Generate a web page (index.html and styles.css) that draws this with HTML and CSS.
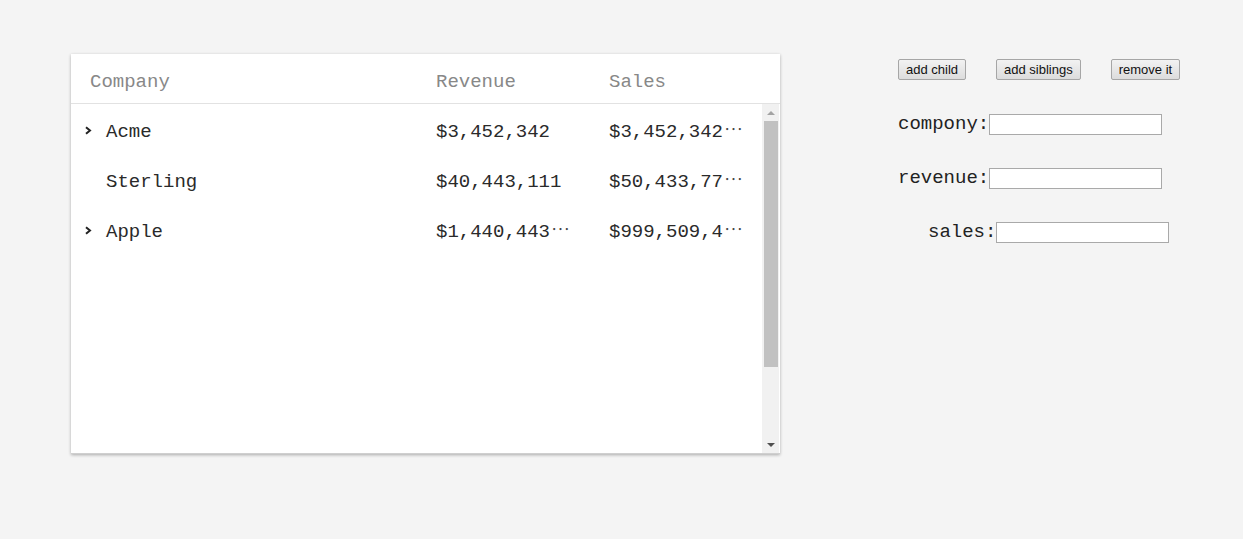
FILE: index.html
```html
<!DOCTYPE html>
<html>
<head>
<meta charset="utf-8">
<link rel="stylesheet" href="styles.css">
</head>
<body>
<div class="page">
  <div class="card">
    <div class="head">
      <div class="col c-company">Company</div>
      <div class="col c-rev">Revenue</div>
      <div class="col c-sales">Sales</div>
    </div>
    <div class="body">
      <div class="rows">
        <div class="row">
          <div class="col c-company"><span class="chev"><svg width="8" height="9" viewBox="0 0 8 9"><path d="M2 1.2 L6 4.5 L2 7.8" fill="none" stroke="#222" stroke-width="2"/></svg></span>Acme</div>
          <div class="col c-rev">$3,452,342</div>
          <div class="col c-sales">$3,452,342<span class="ell">⋯</span></div>
        </div>
        <div class="row">
          <div class="col c-company"><span class="chev"></span>Sterling</div>
          <div class="col c-rev">$40,443,111</div>
          <div class="col c-sales">$50,433,77<span class="ell">⋯</span></div>
        </div>
        <div class="row">
          <div class="col c-company"><span class="chev"><svg width="8" height="9" viewBox="0 0 8 9"><path d="M2 1.2 L6 4.5 L2 7.8" fill="none" stroke="#222" stroke-width="2"/></svg></span>Apple</div>
          <div class="col c-rev">$1,440,443<span class="ell">⋯</span></div>
          <div class="col c-sales">$999,509,4<span class="ell">⋯</span></div>
        </div>
      </div>
      <div class="scrollbar">
        <div class="arrow up"></div>
        <div class="thumb"></div>
        <div class="track-rest"></div>
        <div class="arrow down"></div>
      </div>
    </div>
  </div>
  <div class="panel">
    <div class="buttons">
      <button class="btn">add child</button>
      <button class="btn">add siblings</button>
      <button class="btn">remove it</button>
    </div>
    <div class="field"><span class="label">compony:</span><input class="inp" type="text"></div>
    <div class="field"><span class="label">revenue:</span><input class="inp" type="text"></div>
    <div class="field shift"><span class="label">sales:</span><input class="inp" type="text"></div>
  </div>
</div>
</body>
</html>
```
FILE: styles.css
```css
html, body {
  margin: 0;
  padding: 0;
  background: #f4f4f4;
}
.page {
  display: flex;
  align-items: flex-start;
  padding: 54px 0 40px 71px;
  font-family: "Liberation Mono", "DejaVu Sans Mono", monospace;
  font-size: 19px;
}
.card {
  width: 709px;
  height: 399px;
  background: #fff;
  border-bottom: 1px solid #cfcfcf;
  box-shadow: 0 1px 3px rgba(0,0,0,0.3);
  display: flex;
  flex-direction: column;
}
.head {
  display: flex;
  border-bottom: 1px solid #e2e2e2;
  align-items: center;
  padding-top: 6px;
  box-sizing: border-box;
  height: 50px;
  color: #888;
}
.col {
  white-space: nowrap;
  box-sizing: border-box;
  line-height: 30px;
}
.c-company { width: 349px; padding-left: 19px; display: flex; align-items: center; }
.c-rev { width: 173px; padding-left: 16px; }
.c-sales { width: 169px; padding-left: 16px; }
.body {
  flex: 1;
  display: flex;
  min-height: 0;
}
.rows {
  width: 691px;
  color: #2a2a2a;
  padding-top: 3px;
}
.row {
  display: flex;
  height: 50px;
  align-items: center;
}
.row .c-company { padding-left: 13px; }
.chev {
  width: 22px;
  height: 9px;
  display: inline-flex;
  align-items: center;
  position: relative;
  top: -2px;
}
.chev svg { display: block; }
.ell {
  line-height: 1;
  font-family: "Noto Sans CJK SC", sans-serif;
  font-weight: 300;
  color: #444;
  padding-left: 1px;
}
.scrollbar {
  width: 17px;
  background: #f1f1f1;
  display: flex;
  flex-direction: column;
  align-items: center;
}
.arrow {
  height: 17px;
  width: 17px;
  display: flex;
  align-items: center;
  justify-content: center;
}
.arrow::after {
  content: "";
  border-left: 4px solid transparent;
  border-right: 4px solid transparent;
}
.arrow.up::after { border-bottom: 4px solid #a3a3a3; }
.arrow.down::after { border-top: 4px solid #505050; }
.thumb {
  width: 14px;
  height: 246px;
  background: #c1c1c1;
}
.track-rest { flex: 1; }
.panel {
  margin-left: 118px;
  padding-top: 5px;
  display: flex;
  flex-direction: column;
  align-items: flex-start;
}
.buttons {
  display: flex;
  gap: 30px;
  margin-bottom: 34px;
}
.btn {
  font-family: "Liberation Sans", Arial, sans-serif;
  font-size: 13px;
  height: 21px;
  padding: 0 7px;
  color: #111;
  background: linear-gradient(#f2f2f2, #dcdcdc);
  border: 1px solid #a6a6a6;
  border-radius: 2px;
  line-height: 18px;
}
.field {
  display: flex;
  align-items: center;
  height: 21px;
  margin-bottom: 33px;
  color: #222;
}
.field.shift { margin-left: 30px; }
.label { line-height: 21px; }
.inp {
  width: 173px;
  height: 21px;
  box-sizing: border-box;
  border: 1px solid #a9a9a9;
  background: #fff;
  padding: 0 2px;
  margin: 0;
}
```
